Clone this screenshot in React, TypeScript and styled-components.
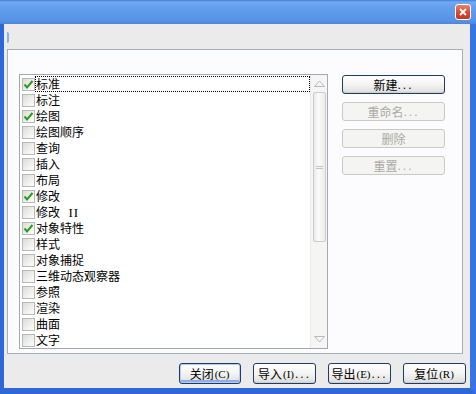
import React from "react";
import styled, { createGlobalStyle, css } from "styled-components";

const GlobalStyle = createGlobalStyle`
  html, body { margin: 0; padding: 0; background: #fff; }
  body { width: 476px; height: 394px; overflow: hidden; }
  * { box-sizing: border-box; }
`;

const FONT = `"Noto Sans CJK SC", "Liberation Sans", sans-serif`;

const Window = styled.div`
  width: 476px;
  height: 394px;
  display: flex;
  flex-direction: column;
  background: #2a62d8;
  border-left: 4px solid #2f67d6;
  border-right: 6px solid #3a74e0;
  border-bottom: 6px solid #2f66d8;
  font-family: ${FONT};
  font-size: 12px;
  color: #000;
`;

const TitleBar = styled.div`
  height: 24px;
  flex: none;
  display: flex;
  align-items: center;
  justify-content: flex-end;
  margin-left: -4px;
  margin-right: -6px;
  padding-right: 5px;
  background: linear-gradient(to bottom, #3f7fdc 0px, #72a9f0 2px, #629eeb 8px, #5894e7 20px, #4a86dc 24px);
`;

const CloseButton = styled.div`
  width: 16px;
  height: 16px;
  border-radius: 3px;
  border: 1px solid #fff;
  background: linear-gradient(to bottom, #e8826a, #d2462e 60%, #c03a24);
  display: flex;
  align-items: center;
  justify-content: center;
`;

const Client = styled.div`
  flex: 1;
  display: flex;
  flex-direction: column;
  background: #ebebeb;
  padding: 0 3px 4px 3px;
`;

const TabStrip = styled.div`
  height: 25px;
  flex: none;
  display: flex;
  align-items: center;
`;

const TabStub = styled.div`
  width: 2px;
  height: 11px;
  margin-top: 1px;
  background: #8fb0e0;
  border-radius: 0 2px 2px 0;
`;

const Panel = styled.div`
  height: 305px;
  flex: none;
  display: flex;
  align-items: flex-start;
  border: 1px solid #a7aeb8;
  background: #fcfcfe;
  padding: 24px 0 0 11px;
  margin-right: 4px;
`;

const ListBox = styled.div`
  width: 309px;
  height: 275px;
  flex: none;
  display: flex;
  border: 1px solid #a2a9b3;
  background: #fff;
  overflow: hidden;
`;

const Items = styled.div`
  flex: 1;
  display: flex;
  flex-direction: column;
  padding: 1px 0 0 2px;
`;

const Row = styled.div`
  height: 16px;
  flex: none;
  display: flex;
  align-items: center;
`;

const Box = styled.div`
  width: 13px;
  height: 13px;
  flex: none;
  border: 1px solid #b8b8b8;
  background: linear-gradient(135deg, #dcdcd8, #f4f4f2 70%, #ffffff);
  display: flex;
  align-items: center;
  justify-content: center;
`;

const Label = styled.div<{ $focus?: boolean }>`
  flex: 1;
  height: 16px;
  line-height: 16px;
  padding-left: 1px;
  white-space: pre;
  ${(p) =>
    p.$focus &&
    css`
      outline: 1px dotted #000;
      outline-offset: -1px;
    `}
`;

const Roman = styled.span`
  font-family: "Liberation Serif", serif;
  font-size: 13px;
  letter-spacing: 1px;
`;

const ScrollBar = styled.div`
  width: 17px;
  flex: none;
  display: flex;
  flex-direction: column;
  align-items: center;
  background: #f5f5f3;
  border-left: 1px solid #eceae6;
`;

const Arrow = styled.div`
  height: 17px;
  flex: none;
  display: flex;
  align-items: center;
  justify-content: center;
`;

const Track = styled.div`
  flex: 1;
  width: 100%;
  display: flex;
  flex-direction: column;
  align-items: center;
`;

const Thumb = styled.div`
  width: 13px;
  height: 150px;
  border: 1px solid #c9cdd3;
  border-radius: 2px;
  background: linear-gradient(to right, #e8e8e6, #fbfbfb 40%, #ececea);
  display: flex;
  align-items: center;
  justify-content: center;
`;

const Grip = styled.div`
  width: 7px;
  height: 3px;
  border-top: 1px solid #c4c4c4;
  border-bottom: 1px solid #c4c4c4;
`;

const SideButtons = styled.div`
  display: flex;
  flex-direction: column;
  gap: 8px;
  margin-left: 14px;
  margin-top: 1px;
`;

const Button = styled.div<{ $disabled?: boolean; $default?: boolean; $w?: number; $h?: number }>`
  width: ${(p) => p.$w ?? 103}px;
  height: ${(p) => p.$h ?? 19}px;
  flex: none;
  display: flex;
  align-items: center;
  justify-content: center;
  border-radius: 3px;
  font-size: 12px;
  white-space: pre;
  border: 1px solid ${(p) => (p.$disabled ? "#c9c9c6" : "#1e3a6a")};
  color: ${(p) => (p.$disabled ? "#aaa9a4" : "#000")};
  background: ${(p) =>
    p.$disabled
      ? "#f4f4f2"
      : "linear-gradient(to bottom, #ffffff 0%, #f4f4f2 50%, #e4e4e2 85%, #d6d6d2 100%)"};
  box-shadow: ${(p) =>
    p.$default
      ? "inset 0 0 0 1px #b8ccf4, inset 0 -2px 0 1px #8eaee8"
      : p.$disabled
      ? "none"
      : "inset 0 -1px 0 #cfcfcb"};
`;

const Dots = styled.span`
  letter-spacing: 2px;
  font-family: "Liberation Sans", sans-serif;
`;

const Small = styled.span`
  font-size: 11px;
  font-family: "Liberation Serif", serif;
  padding: 0 1px;
`;

const Footer = styled.div`
  display: flex;
  justify-content: flex-end;
  gap: 12px;
  margin-top: 9px;
  padding-right: 1px;
`;

const items: [string, boolean, string?][] = [
  ["标准", true],
  ["标注", false],
  ["绘图", true],
  ["绘图顺序", false],
  ["查询", false],
  ["插入", false],
  ["布局", false],
  ["修改", true],
  ["修改", false, "II"],
  ["对象特性", true],
  ["样式", false],
  ["对象捕捉", false],
  ["三维动态观察器", false],
  ["参照", false],
  ["渲染", false],
  ["曲面", false],
  ["文字", false],
];

const Check = () => (
  <svg width="11" height="11" viewBox="0 0 11 11">
    <path d="M1.5 5.5 L4 8.5 L9.5 2" fill="none" stroke="#2f9a22" strokeWidth="2" />
  </svg>
);

const TriUp = () => (
  <svg width="11" height="7" viewBox="0 0 11 7">
    <path d="M0.5 6.5 L5.5 1 L10.5 6.5 Z" fill="none" stroke="#b4b8c0" strokeWidth="1" />
  </svg>
);

const TriDown = () => (
  <svg width="11" height="7" viewBox="0 0 11 7">
    <path d="M0.5 0.5 L5.5 6 L10.5 0.5 Z" fill="none" stroke="#b4b8c0" strokeWidth="1" />
  </svg>
);

export default function App() {
  return (
    <>
      <GlobalStyle />
      <Window>
        <TitleBar>
          <CloseButton>
            <svg width="8" height="8" viewBox="0 0 8 8">
              <path d="M1 1 L7 7 M7 1 L1 7" stroke="#fff" strokeWidth="1.8" />
            </svg>
          </CloseButton>
        </TitleBar>
        <Client>
          <TabStrip>
            <TabStub />
          </TabStrip>
          <Panel>
            <ListBox>
              <Items>
                {items.map(([name, on, suffix], i) => (
                  <Row key={name + i}>
                    <Box>{on && <Check />}</Box>
                    <Label $focus={i === 0}>
                      {name}
                      {suffix && <Roman>{"  " + suffix}</Roman>}
                    </Label>
                  </Row>
                ))}
              </Items>
              <ScrollBar>
                <Arrow>
                  <TriUp />
                </Arrow>
                <Track>
                  <Thumb>
                    <Grip />
                  </Thumb>
                </Track>
                <Arrow>
                  <TriDown />
                </Arrow>
              </ScrollBar>
            </ListBox>
            <SideButtons>
              <Button>
                新建<Dots>...</Dots>
              </Button>
              <Button $disabled>
                重命名<Dots>...</Dots>
              </Button>
              <Button $disabled>删除</Button>
              <Button $disabled>
                重置<Dots>...</Dots>
              </Button>
            </SideButtons>
          </Panel>
          <Footer>
            <Button $default $w={62} $h={21}>
              关闭<Small>(C)</Small>
            </Button>
            <Button $w={63} $h={21}>
              导入<Small>(I)</Small>
              <Dots>...</Dots>
            </Button>
            <Button $w={63} $h={21}>
              导出<Small>(E)</Small>
              <Dots>...</Dots>
            </Button>
            <Button $w={63} $h={21}>
              复位<Small>(R)</Small>
            </Button>
          </Footer>
        </Client>
      </Window>
    </>
  );
}
